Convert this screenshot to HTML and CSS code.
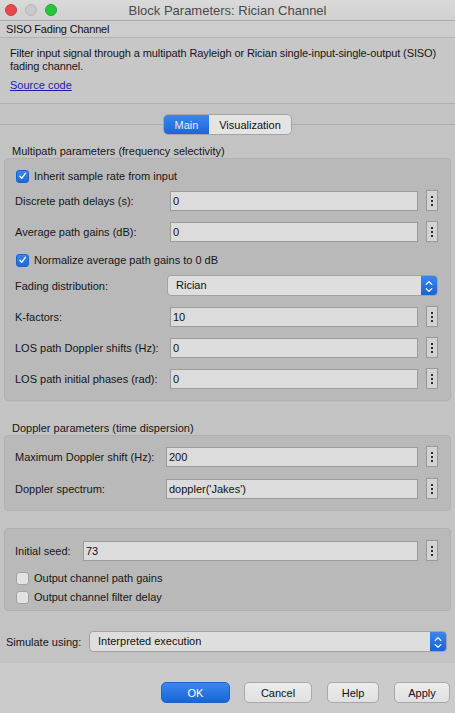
FILE: index.html
```html
<!DOCTYPE html>
<html>
<head>
<meta charset="utf-8">
<link rel="stylesheet" href="styles.css">
</head>
<body>
<div class="window">
  <div class="titlebar">
    <div class="lights">
      <span class="light red"></span>
      <span class="light gray"></span>
      <span class="light green"></span>
    </div>
    <div class="title">Block Parameters: Rician Channel</div>
    <div></div>
  </div>
  <div class="blockname">SISO Fading Channel</div>
  <div class="desc">
    <p class="desc-text">Filter input signal through a multipath Rayleigh or Rician single-input-single-output (SISO) fading channel.</p>
    <a class="link" href="#">Source code</a>
  </div>
  <div class="body">
    <div class="tabrow">
      <div class="tabs">
        <span class="tab active">Main</span>
        <span class="tab">Visualization</span>
      </div>
    </div>

    <div class="heading">Multipath parameters (frequency selectivity)</div>
    <div class="group g1">
      <label class="check-row"><span class="cb on"><svg viewBox="0 0 14 14" width="14" height="14"><path d="M3.6 7.4 L6 10 L10.6 3.6" fill="none" stroke="#fff" stroke-width="1.7" stroke-linecap="round" stroke-linejoin="round"/></svg></span>Inherit sample rate from input</label>
      <div class="row"><span class="lbl">Discrete path delays (s):</span><span class="input">0</span><span class="dots"><i></i><i></i><i></i></span></div>
      <div class="row"><span class="lbl">Average path gains (dB):</span><span class="input">0</span><span class="dots"><i></i><i></i><i></i></span></div>
      <label class="check-row before-select"><span class="cb on"><svg viewBox="0 0 14 14" width="14" height="14"><path d="M3.6 7.4 L6 10 L10.6 3.6" fill="none" stroke="#fff" stroke-width="1.7" stroke-linecap="round" stroke-linejoin="round"/></svg></span>Normalize average path gains to 0 dB</label>
      <div class="row"><span class="lbl">Fading distribution:</span>
        <span class="select wide"><span class="sel-text">Rician</span><span class="sel-arrow"><svg viewBox="0 0 16 21" width="16" height="21"><path d="M5.2 8.4 L8 5.6 L10.8 8.4 M5.2 12.6 L8 15.4 L10.8 12.6" fill="none" stroke="#fff" stroke-width="1.3" stroke-linecap="round" stroke-linejoin="round"/></svg></span></span>
      </div>
      <div class="row"><span class="lbl">K-factors:</span><span class="input">10</span><span class="dots"><i></i><i></i><i></i></span></div>
      <div class="row"><span class="lbl">LOS path Doppler shifts (Hz):</span><span class="input">0</span><span class="dots"><i></i><i></i><i></i></span></div>
      <div class="row"><span class="lbl">LOS path initial phases (rad):</span><span class="input">0</span><span class="dots"><i></i><i></i><i></i></span></div>
    </div>

    <div class="heading h2">Doppler parameters (time dispersion)</div>
    <div class="group g2">
      <div class="row"><span class="lbl">Maximum Doppler shift (Hz):</span><span class="input">200</span><span class="dots"><i></i><i></i><i></i></span></div>
      <div class="row"><span class="lbl">Doppler spectrum:</span><span class="input">doppler('Jakes')</span><span class="dots"><i></i><i></i><i></i></span></div>
    </div>

    <div class="group g3">
      <div class="row"><span class="lbl">Initial seed:</span><span class="input">73</span><span class="dots"><i></i><i></i><i></i></span></div>
      <label class="check-row"><span class="cb"></span>Output channel path gains</label>
      <label class="check-row"><span class="cb"></span>Output channel filter delay</label>
    </div>

    <div class="sim-row">
      <span class="sim-lbl">Simulate using:</span>
      <span class="select"><span class="sel-text">Interpreted execution</span><span class="sel-arrow"><svg viewBox="0 0 16 21" width="16" height="21"><path d="M5.2 8.4 L8 5.6 L10.8 8.4 M5.2 12.6 L8 15.4 L10.8 12.6" fill="none" stroke="#fff" stroke-width="1.3" stroke-linecap="round" stroke-linejoin="round"/></svg></span></span>
    </div>
  </div>
  <div class="footer">
    <button class="btn ok">OK</button>
    <button class="btn cancel">Cancel</button>
    <button class="btn help">Help</button>
    <button class="btn apply">Apply</button>
  </div>
</div>
</body>
</html>
```

FILE: styles.css
```css
* { box-sizing: border-box; }
html, body { margin: 0; padding: 0; }
body {
  width: 455px;
  height: 713px;
  overflow: hidden;
  font-family: "Liberation Sans", Arial, sans-serif;
  font-size: 11px;
  color: #1a1a1a;
  background: #c2c2c2;
}
.window { display: flex; flex-direction: column; height: 713px; }

.titlebar {
  height: 21px;
  display: grid;
  grid-template-columns: 1fr auto 1fr;
  align-items: center;
  background: linear-gradient(#dadada, #d0d0d0);
  border-bottom: 1px solid #a9a9a9;
}
.lights { display: flex; gap: 8px; padding-left: 5px; align-items: center; }
.light { width: 12px; height: 12px; border-radius: 50%; display: block; }
.light.red { background: #e5484d; border: 1px solid #d33b40; }
.light.gray { background: #c9c9c9; border: 1px solid #b8b8b8; }
.light.green { background: #29c33c; border: 1px solid #1ea830; }
.title { font-size: 13px; color: #4a4a4a; }

.blockname {
  height: 17px;
  line-height: 16px;
  padding-left: 6px;
  background: #cdcdcd;
  border-bottom: 1px solid #b3b3b3;
  color: #111;
  letter-spacing: -0.2px;
}
.desc {
  height: 66px;
  padding: 9px 10px 0 10px;
  background: #c7c7c7;
  border-bottom: 1px solid #b0b0b0;
}
.desc-text { margin: 0; line-height: 13px; color: #161616; letter-spacing: -0.1px; }
.link { display: inline-block; margin-top: 6px; color: #1d1ab8; text-decoration: underline; line-height: 13px; }

.body { flex: 1; display: flex; flex-direction: column; padding: 0 4px; background: #c3c3c3; }

.tabrow { display: flex; align-items: center; margin: 10px -4px 0; }
.tabrow::before, .tabrow::after { content: ""; flex: 1; height: 1px; background: #acacac; }
.tabs {
  display: flex;
  height: 21px;
  border: 1px solid #a4a4a4;
  border-radius: 5px;
  overflow: hidden;
  background: #e4e4e4;
}
.tab { display: flex; align-items: center; justify-content: center; font-size: 11px; color: #111; }
.tab.active {
  width: 45px;
  color: #e6eefc;
  background: linear-gradient(#3a88ee, #1b66da);
}
.tab:not(.active) { width: 82px; }

.heading { margin-top: 9px; padding-left: 8px; line-height: 14px; color: #161616; }
.heading.h2 { margin-top: 20px; }

.group {
  border: 1px solid #b0b0b0;
  border-radius: 4px;
  background: #b9b9b9;
  display: flex;
  flex-direction: column;
  gap: 11px;
  padding: 10px 12px 12px 10px;
}
.g2 { gap: 12px; padding-bottom: 12px; }
.g3 { margin-top: 17px; padding-top: 11px; padding-bottom: 6px; }

.row { display: grid; grid-template-columns: 147px 1fr 12px; column-gap: 8px; align-items: center; height: 20px; }
.g2 .row { grid-template-columns: 143px 1fr 12px; }
.g3 .row { grid-template-columns: 60px 1fr 12px; }
.lbl { color: #161616; white-space: nowrap; }
.input {
  height: 20px;
  background: #dcdcdc;
  border: 1px solid #9c9c9c;
  padding-left: 2px;
  line-height: 18px;
  color: #111;
}
.dots {
  height: 21px;
  background: #d3d3d3;
  border: 1px solid #999;
  display: flex;
  flex-direction: column;
  align-items: center;
  justify-content: center;
  gap: 2px;
}
.dots i { display: block; width: 2px; height: 2px; background: #2a2a2a; }

.check-row { display: flex; align-items: center; gap: 5px; height: 14px; margin-bottom: -4px; color: #161616; }
.check-row.before-select { margin-top: 1px; margin-bottom: -3px; }
.g3 .check-row { margin-bottom: -6px; }
.g3 .check-row:last-child { margin-bottom: 0; }
.cb {
  width: 13px; height: 13px;
  border-radius: 3px;
  background: #e2e2e2;
  border: 1px solid #a3a3a3;
  display: flex; align-items: center; justify-content: center;
  margin-left: 1px;
}
.cb.on { background: linear-gradient(#3b87ec, #1e69d9); border-color: #1c62c9; }
.cb svg { display: block; }

.select {
  height: 21px;
  display: flex;
  border: 1px solid #a2a2a2;
  border-radius: 4px;
  overflow: hidden;
  background: #dedede;
}
.select.wide { grid-column: 2 / 4; margin-left: -3px; }
.sel-text { flex: 1; padding-left: 8px; line-height: 19px; color: #111; }
.sel-arrow { width: 16px; background: linear-gradient(#3a86ec, #1a63d6); display: flex; }
.sel-arrow svg { display: block; }

.sim-row { display: flex; align-items: center; margin: 20px 4px 0 2px; }
.sim-lbl { width: 83px; color: #161616; }
.sim-row .select { flex: 1; }

.footer {
  height: 50px;
  background: #cbcbcb;
  display: flex;
  align-items: flex-start;
  padding: 19px 0 0 161px;
}
.btn {
  font-family: inherit;
  font-size: 11px;
  height: 21px;
  border: 1px solid #a8a8a8;
  border-radius: 5px;
  background: linear-gradient(#ececec, #e0e0e0);
  color: #111;
  padding: 0;
}
.ok { width: 69px; color: #fff; background: linear-gradient(#3a88ee, #1865d8); border-color: #2062c8; }
.cancel { width: 68px; margin-left: 14px; }
.help { width: 52px; margin-left: 15px; }
.apply { width: 56px; margin-left: 15px; }
```
